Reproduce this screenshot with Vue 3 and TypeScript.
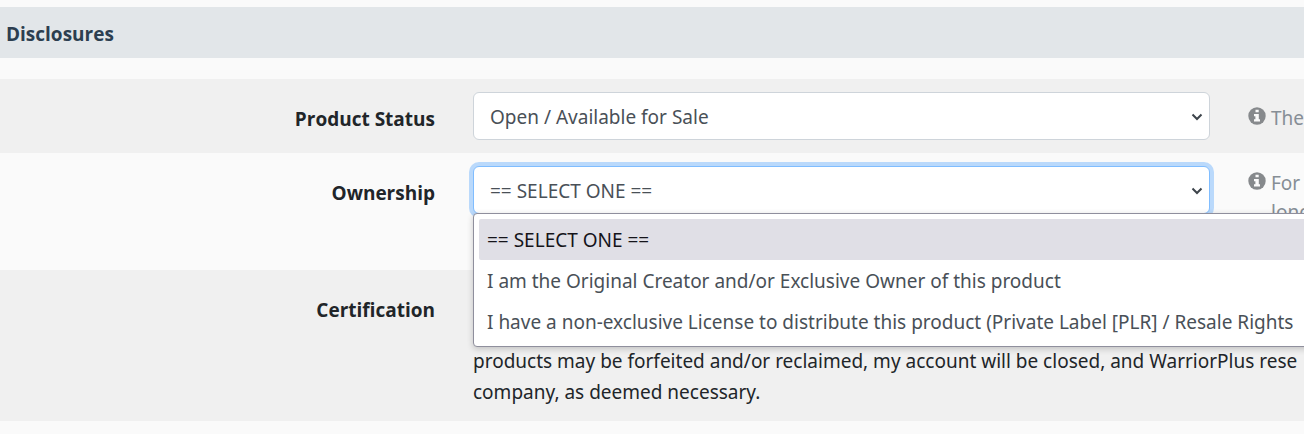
<script setup lang="ts">
import { ref } from 'vue'

const statuses: string[] = ['Open / Available for Sale']
const ownerships: string[] = [
  '== SELECT ONE ==',
  'I am the Original Creator and/or Exclusive Owner of this product',
  'I have a non-exclusive License to distribute this product (Private Label [PLR] / Resale Rights',
]
const status = ref(statuses[0])
const ownership = ref(ownerships[0])
const open = ref(true)

function choose(option: string): void {
  ownership.value = option
  open.value = false
}
</script>

<template>
  <main class="page">
    <h2 class="section-title">Disclosures</h2>
    <form class="rows" @submit.prevent>
      <div class="row shaded">
        <label class="label" for="status">Product Status</label>
        <div class="control">
          <select id="status" v-model="status" class="select">
            <option v-for="s in statuses" :key="s">{{ s }}</option>
          </select>
          <svg class="chevron" viewBox="0 0 12 8" aria-hidden="true"><path d="M1.5 1.5 L6 6 L10.5 1.5" /></svg>
        </div>
        <p class="hint centered">
          <svg class="info" viewBox="0 0 18 18" aria-hidden="true"><circle cx="9" cy="9" r="8.700" /><path d="M7.500 2.700h3.200v2.600H7.500zM6 7h4.800v5.200H12v2.300H6v-2.300h1.400V9.200H6z" /></svg>
          <span>The</span>
        </p>
      </div>

      <div class="row tall">
        <label class="label" for="ownership">Ownership</label>
        <div class="control">
          <select id="ownership" v-model="ownership" class="select" :class="{ active: open }">
            <option v-for="o in ownerships" :key="o">{{ o }}</option>
          </select>
          <svg class="chevron" viewBox="0 0 12 8" aria-hidden="true"><path d="M1.5 1.5 L6 6 L10.5 1.5" /></svg>
          <ul v-if="open" class="menu" role="listbox" aria-label="Ownership">
            <li
              v-for="o in ownerships"
              :key="o"
              class="choice"
              :class="{ current: o === ownership }"
              role="option"
              :aria-selected="o === ownership"
              @click="choose(o)"
            >{{ o }}</li>
          </ul>
        </div>
        <p class="hint">
          <svg class="info" viewBox="0 0 18 18" aria-hidden="true"><circle cx="9" cy="9" r="8.700" /><path d="M7.500 2.700h3.200v2.600H7.500zM6 7h4.800v5.200H12v2.300H6v-2.300h1.400V9.200H6z" /></svg>
          <span>For<br />long</span>
        </p>
      </div>

      <div class="row shaded">
        <h3 class="label">Certification</h3>
        <p class="terms">
          products may be forfeited and/or reclaimed, my account will be closed, and WarriorPlus rese<br />
          company, as deemed necessary.
        </p>
      </div>
    </form>
  </main>
</template>

<style>
body {
  background: #fafafa;
}
</style>

<style scoped>
.page {
  padding: 7px 0 13px;
  overflow: hidden;
  color: #212529;
  font-family: "Noto Sans", "Open Sans", sans-serif;
  font-size: 19px;
  line-height: 31px;
}
.section-title {
  margin: 0 0 21px;
  padding: 12px 6px 8px;
  background: #e2e6e9;
  color: #2c3e50;
  font-family: "Open Sans", sans-serif;
  font-size: 19px;
  font-weight: 700;
  line-height: 31px;
}
.row {
  display: grid;
  grid-template-columns: minmax(0, 435fr) minmax(0, 737fr) minmax(0, 56fr);
  column-gap: 38px;
  align-items: start;
  padding: 13px 0;
}
.shaded {
  background: #f0f0f0;
}
.row.tall {
  padding-bottom: 43px;
}
.label {
  margin: 0;
  padding-top: 12px;
  font-family: "Open Sans", sans-serif;
  font-size: 19px;
  font-weight: 700;
  text-align: right;
}
.control {
  position: relative;
}
.select {
  display: block;
  box-sizing: border-box;
  width: 100%;
  height: 48px;
  padding: 2px 36px 0 16px;
  appearance: none;
  background: #fff;
  border: 1px solid #ced4da;
  border-radius: 6px;
  color: #495057;
  font: inherit;
}
.select.active {
  border-color: #80bdff;
  box-shadow: 0 0 0 4px #bad9fb;
  outline: none;
}
.chevron {
  position: absolute;
  top: 21px;
  right: 7px;
  width: 12px;
  height: 8px;
  fill: none;
  stroke: #3d444b;
  stroke-width: 2;
  pointer-events: none;
}
.menu {
  position: absolute;
  z-index: 2;
  top: 47px;
  left: 0;
  min-width: 120%;
  width: max-content;
  box-sizing: border-box;
  margin: 0;
  padding: 5px 5px 4px;
  list-style: none;
  background: #fff;
  border: 1px solid #8f8f9d;
  border-radius: 4px;
  box-shadow: 0 2px 6px rgba(0, 0, 0, 0.2);
  color: #495057;
  font-size: 19px;
}
.choice {
  padding: 6px 8px 4px;
  border-radius: 2px;
  line-height: 31px;
  white-space: nowrap;
}
.choice.current {
  background: #e0dfe6;
  color: #15141a;
}
.hint {
  display: flex;
  gap: 5px;
  margin: 0;
  padding-top: 3px;
  color: #868e96;
  font-size: 19px;
  line-height: 29px;
  white-space: nowrap;
}
.hint.centered {
  padding-top: 12px;
}
.info {
  flex: none;
  width: 18px;
  height: 18px;
  margin-top: 3px;
}
.info circle {
  fill: #86898c;
}
.info path {
  fill: #fafafa;
}
.terms {
  margin: 0;
  padding-top: 63px;
  white-space: nowrap;
}
</style>
